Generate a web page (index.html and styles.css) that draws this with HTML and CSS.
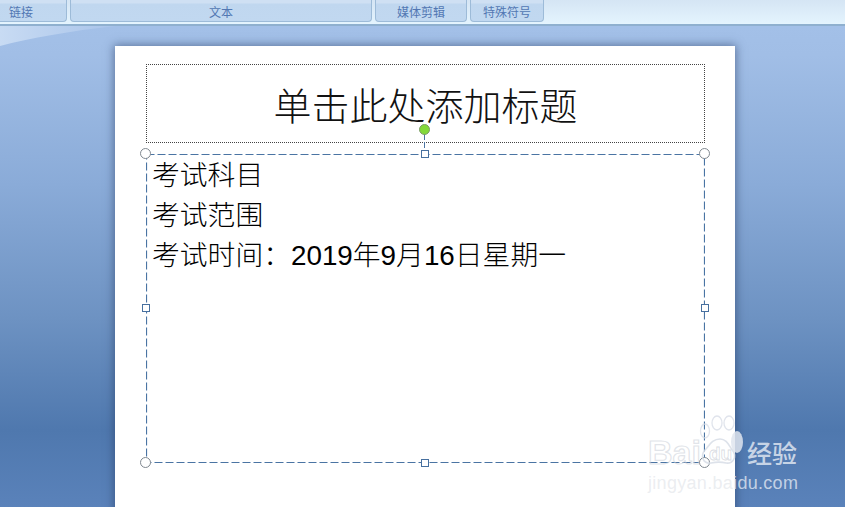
FILE: index.html
```html
<!DOCTYPE html>
<html lang="zh-CN">
<head>
    <meta charset="UTF-8">
    <title>单击此处添加标题</title>
    <link rel="stylesheet" href="styles.css">
</head>
<body>
    <div class="ribbon">
        <div class="group group-link">链接</div>
        <div class="group group-text">文本</div>
        <div class="group group-media">媒体剪辑</div>
        <div class="group group-symbol">特殊符号</div>
    </div>

    <div class="workspace">
        <!-- light swoosh in the corner -->
        <svg class="swoosh" width="130" height="26" viewBox="0 0 130 26">
            <defs>
                <linearGradient id="swooshFill" x1="0" x2="1" y1="0" y2="0">
                    <stop offset="0" stop-color="#c8dbf3"/>
                    <stop offset="1" stop-color="#a9c4ea"/>
                </linearGradient>
            </defs>
            <path d="M0 0H116C70 5 30 12 0 20Z" fill="url(#swooshFill)"/>
        </svg>

        <div class="slide">
            <div class="title-box">单击此处添加标题</div>
            <div class="body-box">
                <svg class="dash-frame" width="559" height="309" viewBox="0 0 559 309">
                    <rect x="0.5" y="0.5" width="558" height="308" fill="none" stroke="#4a74a3" stroke-width="1.2" stroke-dasharray="8 3"/>
                </svg>
                <span class="stem"></span>
                <span class="rotate"></span>
                <span class="handle round tl"></span>
                <span class="handle round tr"></span>
                <span class="handle round bl"></span>
                <span class="handle round br"></span>
                <span class="handle square tc"></span>
                <span class="handle square bc"></span>
                <span class="handle square ml"></span>
                <span class="handle square mr"></span>
                <p>考试科目</p>
                <p>考试范围</p>
                <p>考试时间：2019年9月16日星期一</p>
            </div>
        </div>

        <div class="watermark">
            <div class="wm-top">
                <span class="wm-bai">Bai</span>
                <svg class="wm-paw" width="48" height="52" viewBox="0 0 48 52">
                    <ellipse cx="7" cy="16" rx="4.5" ry="7" fill="none" stroke="#d5dbe5" stroke-opacity=".75" stroke-width="1.3"/>
                    <ellipse cx="19" cy="8" rx="5" ry="7" fill="none" stroke="#d5dbe5" stroke-opacity=".75" stroke-width="1.3"/>
                    <ellipse cx="31" cy="8" rx="5" ry="7" fill="none" stroke="#d5dbe5" stroke-opacity=".75" stroke-width="1.3"/>
                    <ellipse cx="39" cy="27" rx="6" ry="11" fill="#dfe5ef" fill-opacity=".85"/>
                    <path d="M22 24C29 24 31 31 35 36C39 42 35 49 28 48C24 47 18 47 13 48C5 49 2 41 7 35C11 31 14 24 22 24Z" fill="none" stroke="#d5dbe5" stroke-opacity=".8" stroke-width="1.6"/>
                    <text x="11" y="45" class="wm-du">du</text>
                </svg>
                <span class="wm-jy">经验</span>
            </div>
            <div class="wm-url"><span class="wm-url-a">jingyan.ba</span><span class="wm-url-b">idu.com</span></div>
        </div>
    </div>
</body>
</html>
```

FILE: styles.css
```css
html, body {
    margin: 0;
    height: 100%;
    overflow: hidden;
}
body {
    font-family: "Liberation Sans", "Noto Sans CJK SC", sans-serif;
    display: flex;
    flex-direction: column;
}
.ribbon {
    height: 26px;
    flex: none;
    display: flex;
    gap: 3px;
    box-sizing: border-box;
    background: linear-gradient(#d5e5f4, #e4f4fe);
    border-bottom: 2px solid #8fb0cf;
}
.group {
    height: 22px;
    box-sizing: border-box;
    background: linear-gradient(#cfe0f3 0, #cfe0f3 3px, #c0d7ef 4px, #c1d8f0 100%);
    border: 1px solid #9dbbd8;
    border-top: 0;
    border-radius: 0 0 4px 4px;
    color: #5277b3;
    font-size: 12px;
    line-height: 24px;
    text-align: center;
    font-family: "Noto Sans CJK SC", sans-serif;
}
.group-link {
    width: 67px;
    text-align: left;
    padding-left: 9px;
    border-left: 0;
    border-radius: 0 0 4px 0;
}
.group-text { width: 302px; }
.group-media { width: 92px; }
.group-symbol { width: 74px; }

.workspace {
    position: relative;
    flex: 1;
    min-height: 0;
    padding: 20px 0 0 115px;
    overflow: hidden;
    background: linear-gradient(#a3c0e8 0%, #a1bee6 6%, #8aabd8 33%, #6d92c2 61%, #4f78ae 84%, #5a82ba 100%);
}
.swoosh {
    position: absolute;
    left: 0;
    top: 0;
}
.slide {
    position: relative;
    width: 620px;
    height: 520px;
    box-sizing: border-box;
    padding: 18px 30px 0 31px;
    background: #fff;
    box-shadow: 0 0 9px 1px rgba(35, 55, 95, 0.55);
}
.title-box {
    height: 79px;
    box-sizing: border-box;
    border: 1px dotted #444;
    font-family: "Noto Sans CJK SC", sans-serif;
    font-weight: 300;
    font-size: 38px;
    line-height: 77px;
    text-align: center;
    color: #111;
}
.body-box {
    position: relative;
    height: 309px;
    margin-top: 11px;
    box-sizing: border-box;
    padding: 2px 0 0 6px;
    font-family: "Liberation Sans", "Noto Sans CJK SC", sans-serif;
    font-weight: 300;
    font-size: 27.8px;
    line-height: 40px;
    color: #000;
}
.body-box p {
    margin: 0;
}
.dash-frame {
    position: absolute;
    left: 0;
    top: 0;
}
.handle {
    position: absolute;
    box-sizing: border-box;
    background: #fff;
}
.handle.round {
    width: 11px;
    height: 11px;
    border: 1.5px solid #808890;
    border-radius: 50%;
}
.handle.square {
    width: 8px;
    height: 8px;
    border: 1px solid #47709f;
}
.tl { left: -6px; top: -6px; }
.tr { right: -5px; top: -6px; }
.bl { left: -6px; bottom: -5px; }
.br { right: -5px; bottom: -5px; }
.tc { left: 275px; top: -4px; }
.bc { left: 275px; bottom: -4px; }
.ml { left: -4px; top: 150px; }
.mr { right: -4px; top: 150px; }
.stem {
    position: absolute;
    left: 278px;
    top: -20px;
    width: 1px;
    height: 16px;
    background: repeating-linear-gradient(#4a74a3 0, #4a74a3 6px, transparent 6px, transparent 8px);
}
.rotate {
    position: absolute;
    left: 273px;
    top: -30px;
    width: 11px;
    height: 11px;
    box-sizing: border-box;
    background: #83d93a;
    border: 1px solid #7c9a68;
    border-radius: 50%;
}

.watermark {
    position: absolute;
    left: 648px;
    top: 391px;
    width: 156px;
}
.wm-top {
    display: flex;
    align-items: flex-end;
    height: 50px;
}
.wm-bai {
    font-size: 34px;
    font-weight: 700;
    line-height: 30px;
    color: transparent;
    -webkit-text-stroke: 1.2px rgba(205, 210, 218, 0.6);
    width: 52px;
}
.wm-paw {
    flex: none;
    margin-left: -2px;
    overflow: visible;
}
.wm-du {
    font-size: 19px;
    font-weight: 700;
    fill: none;
    stroke: #c9ced6;
    stroke-width: 0.8;
    stroke-opacity: 0.7;
}
.wm-jy {
    font-family: "Noto Sans CJK SC", sans-serif;
    font-size: 25px;
    font-weight: 500;
    line-height: 30px;
    color: rgba(232, 237, 245, 0.8);
    white-space: nowrap;
    margin-left: 1px;
}
.wm-url {
    margin-top: 6px;
    font-size: 18px;
    line-height: 20px;
    letter-spacing: 0.3px;
    white-space: nowrap;
}
.wm-url-a {
    color: rgba(205, 210, 218, 0.4);
}
.wm-url-b {
    color: rgba(232, 237, 245, 0.75);
}
```
